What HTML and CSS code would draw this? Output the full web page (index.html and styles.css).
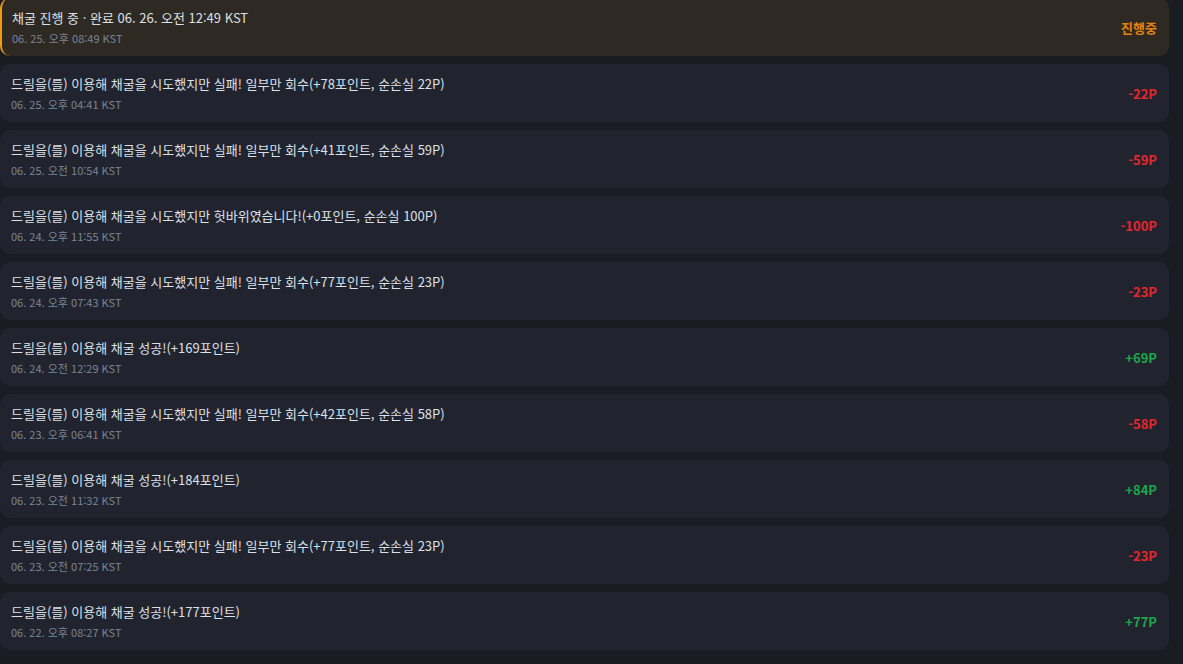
FILE: index.html
```html
<!DOCTYPE html>
<html lang="ko">
<head>
  <meta charset="UTF-8">
  <title>채굴 기록</title>
  <link rel="stylesheet" href="styles.css">
</head>
<body>
  <div class="log-list">
    <div class="log-item pending">
      <div class="log-info">
        <div class="log-title">채굴 진행 중 · 완료 06. 26. 오전 12:49 KST</div>
        <div class="log-date">06. 25. 오후 08:49 KST</div>
      </div>
      <div class="log-value orange">진행중</div>
    </div>
    <div class="log-item">
      <div class="log-info">
        <div class="log-title">드릴을(를) 이용해 채굴을 시도했지만 실패! 일부만 회수(+78포인트, 순손실 22P)</div>
        <div class="log-date">06. 25. 오후 04:41 KST</div>
      </div>
      <div class="log-value red">-22P</div>
    </div>
    <div class="log-item">
      <div class="log-info">
        <div class="log-title">드릴을(를) 이용해 채굴을 시도했지만 실패! 일부만 회수(+41포인트, 순손실 59P)</div>
        <div class="log-date">06. 25. 오전 10:54 KST</div>
      </div>
      <div class="log-value red">-59P</div>
    </div>
    <div class="log-item">
      <div class="log-info">
        <div class="log-title">드릴을(를) 이용해 채굴을 시도했지만 헛바위였습니다!(+0포인트, 순손실 100P)</div>
        <div class="log-date">06. 24. 오후 11:55 KST</div>
      </div>
      <div class="log-value red">-100P</div>
    </div>
    <div class="log-item">
      <div class="log-info">
        <div class="log-title">드릴을(를) 이용해 채굴을 시도했지만 실패! 일부만 회수(+77포인트, 순손실 23P)</div>
        <div class="log-date">06. 24. 오후 07:43 KST</div>
      </div>
      <div class="log-value red">-23P</div>
    </div>
    <div class="log-item">
      <div class="log-info">
        <div class="log-title">드릴을(를) 이용해 채굴 성공!(+169포인트)</div>
        <div class="log-date">06. 24. 오전 12:29 KST</div>
      </div>
      <div class="log-value green">+69P</div>
    </div>
    <div class="log-item">
      <div class="log-info">
        <div class="log-title">드릴을(를) 이용해 채굴을 시도했지만 실패! 일부만 회수(+42포인트, 순손실 58P)</div>
        <div class="log-date">06. 23. 오후 06:41 KST</div>
      </div>
      <div class="log-value red">-58P</div>
    </div>
    <div class="log-item">
      <div class="log-info">
        <div class="log-title">드릴을(를) 이용해 채굴 성공!(+184포인트)</div>
        <div class="log-date">06. 23. 오전 11:32 KST</div>
      </div>
      <div class="log-value green">+84P</div>
    </div>
    <div class="log-item">
      <div class="log-info">
        <div class="log-title">드릴을(를) 이용해 채굴을 시도했지만 실패! 일부만 회수(+77포인트, 순손실 23P)</div>
        <div class="log-date">06. 23. 오전 07:25 KST</div>
      </div>
      <div class="log-value red">-23P</div>
    </div>
    <div class="log-item">
      <div class="log-info">
        <div class="log-title">드릴을(를) 이용해 채굴 성공!(+177포인트)</div>
        <div class="log-date">06. 22. 오후 08:27 KST</div>
      </div>
      <div class="log-value green">+77P</div>
    </div>
  </div>
</body>
</html>
```

FILE: styles.css
```css
body {
  margin: 0;
  background: #1a1c23;
  font-family: "Noto Sans CJK KR", "Noto Sans", sans-serif;
  overflow: hidden;
}

.log-list {
  width: 1169px;
  margin-top: -2px;
  display: flex;
  flex-direction: column;
  gap: 8px;
}

.log-item {
  height: 58px;
  box-sizing: border-box;
  padding: 10px 12px 10px 11px;
  background: #21242f;
  border-radius: 10px;
  display: flex;
  align-items: center;
  justify-content: space-between;
}

.log-item.pending {
  background: #2e2a23;
  border-left: 2px solid #f29a12;
  padding-left: 10px;
}

.log-title {
  font-size: 13px;
  line-height: 20px;
  color: #dce0e7;
  margin-bottom: 2px;
}

.log-date {
  font-size: 11px;
  line-height: 16px;
  color: #7c8494;
}

.log-value {
  font-size: 13px;
  font-weight: bold;
}

.orange { color: #e5830f; }
.red { color: #e5262d; }
.green { color: #1fa64a; }
```
